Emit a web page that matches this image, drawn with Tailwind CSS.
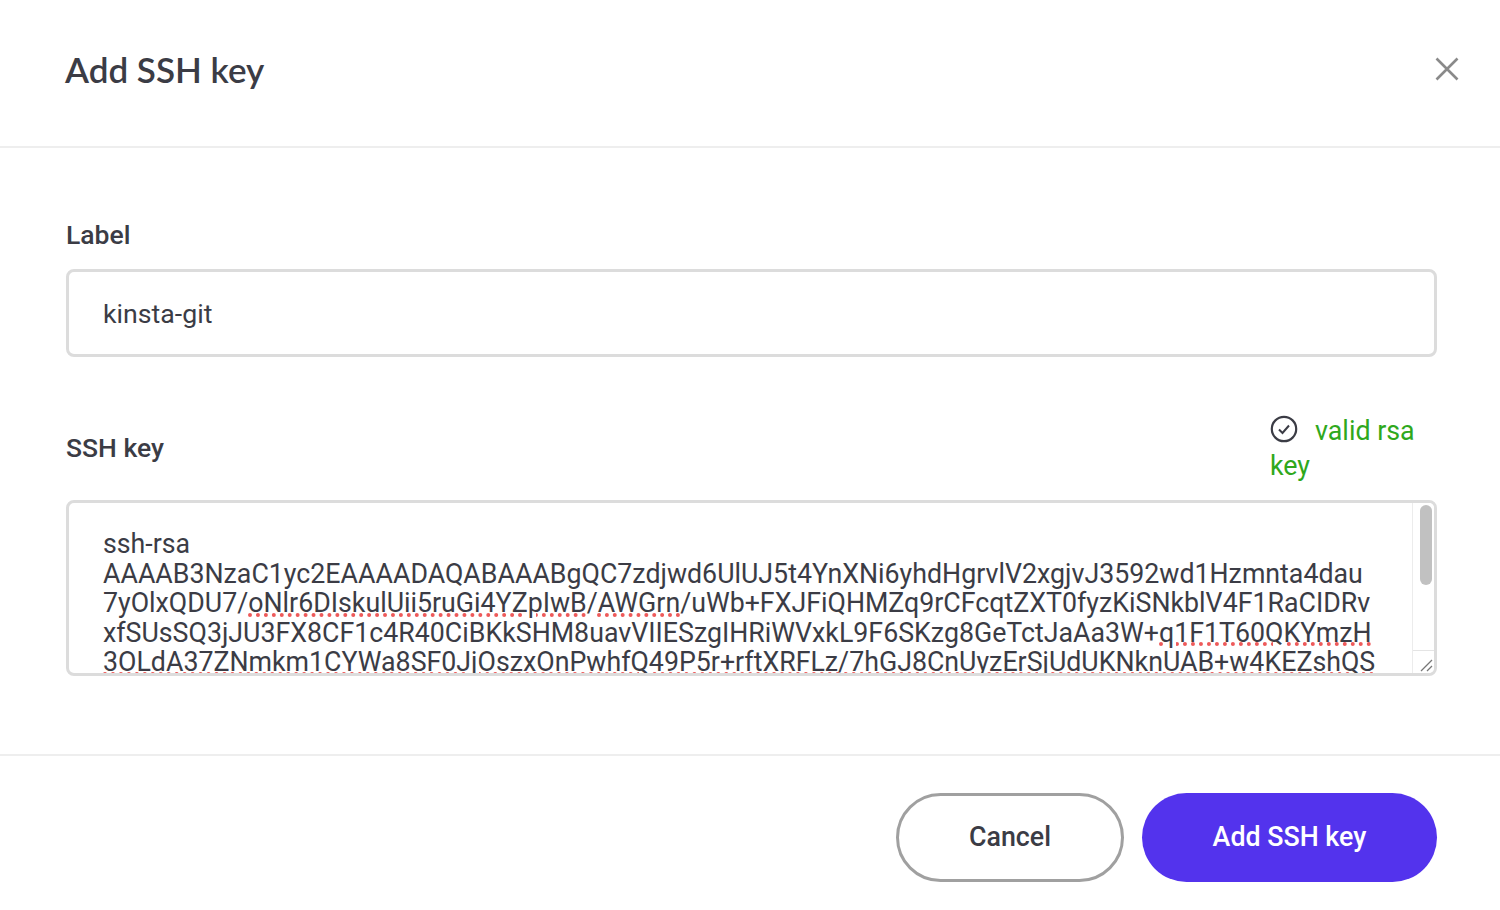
<!DOCTYPE html>
<html lang="en">

<head>
  <meta charset="UTF-8">
  <meta name="viewport" content="width=device-width, initial-scale=1.0">
  <script src="https://cdn.jsdelivr.net/npm/@tailwindcss/browser@4"></script>
  <title>Add SSH key</title>
</head>

<body class="bg-white text-[#3b3c45] font-['Roboto',sans-serif]">
  <div class="w-[1500px] h-[910px] overflow-hidden flex flex-col">
    <!-- header -->
    <div class="h-[148px] shrink-0 border-b-2 border-[#eeeeee] pl-[65px] pr-[40px] pb-[8px] flex justify-between items-center">
      <h1 class="font-['Lato',sans-serif] font-semibold text-[35px] leading-none">Add SSH key</h1>
      <button class="text-[#8a8a8a]">
        <svg class="w-[26px] h-[26px]" viewBox="0 0 26 26" fill="none" stroke="currentColor" stroke-width="2.6">
          <path d="M2.5 2.5l21 21M23.5 2.5l-21 21"></path>
        </svg>
      </button>
    </div>

    <!-- form -->
    <div class="h-[608px] shrink-0 border-b-2 border-[#eeeeee] pl-[66px] pr-[63px] pt-[71px]">
      <label class="block text-[26.5px] font-medium leading-[32px]">Label</label>
      <div class="mt-[18px] h-[88px] border-[3px] border-[#dcdcdc] rounded-[8px] pl-[34px] pt-[3px] flex items-center text-[26.7px]">kinsta-git</div>

      <div class="mt-[44px] h-[99px] flex justify-between">
        <label class="block text-[26.5px] font-medium leading-[32px] mt-[31px]">SSH key</label>
        <div class="w-[167px] text-[26.8px] leading-[35px] text-[#2fa81c] pt-[13px]">
          <svg class="inline-block w-[28px] h-[28px] mr-[17px] align-[-3px] text-[#3b3c45]" viewBox="0 0 28 28" fill="none" stroke="currentColor">
            <circle cx="14" cy="14" r="12.2" stroke-width="2.2"></circle>
            <path d="M9 14.5l3.5 3.5 6.5-7.5" stroke-width="2"></path>
          </svg>valid rsa key
        </div>
      </div>

      <div class="relative h-[176px] border-[3px] border-[#dcdcdc] rounded-[8px] overflow-hidden">
        <div class="pl-[34px] pt-[27px] text-[26.76px] leading-[29.6px] whitespace-nowrap text-[#3b3c45]">
          <div>ssh-rsa</div>
          <div>AAAAB3NzaC1yc2EAAAADAQABAAABgQC7zdjwd6UlUJ5t4YnXNi6yhdHgrvlV2xgjvJ3592wd1Hzmnta4dau</div>
          <div>7yOlxQDU7/<span class="underline decoration-dotted decoration-[#ee5a5a] decoration-[4px] underline-offset-[1px]">oNlr6DIskulUii5ruGi4YZpIwB</span>/<span class="underline decoration-dotted decoration-[#ee5a5a] decoration-[4px] underline-offset-[1px]">AWGrn</span>/uWb+FXJFiQHMZq9rCFcqtZXT0fyzKiSNkblV4F1RaCIDRv</div>
          <div>xfSUsSQ3jJU3FX8CF1c4R40CiBKkSHM8uavVIIESzgIHRiWVxkL9F6SKzg8GeTctJaAa3W+<span class="underline decoration-dotted decoration-[#ee5a5a] decoration-[4px] underline-offset-[1px]">q1F1T60QKYmzH</span></div>
          <div><span class="underline decoration-dotted decoration-[#ee5a5a] decoration-[4px] underline-offset-[1px]">3OLdA37ZNmkm1CYWa8SF0JjOszxOnPwhfQ49P5r+rftXRFLz/7hGJ8CnUyzErSjUdUKNknUAB+w4KEZshQS</span></div>
        </div>
        <!-- scrollbar + resize handle -->
        <div class="absolute top-0 right-0 bottom-0 w-[22px] bg-white border-l border-[#ececec] flex flex-col">
          <div class="mt-[2px] ml-[6.5px] w-[12px] h-[80px] rounded-full bg-[#c1c1c1]"></div>
          <div class="mt-auto h-[23px] border-t border-[#e4e4e4] flex items-end justify-end">
            <svg class="w-[16px] h-[16px]" viewBox="0 0 16 16" fill="none" stroke="#777777" stroke-width="1.3">
              <path d="M3 14L14 3M9 14l5-5"></path>
            </svg>
          </div>
        </div>
      </div>
    </div>

    <!-- footer -->
    <div class="pr-[63px] pt-[37px] flex justify-end gap-[18px]">
      <button class="w-[228px] h-[89px] rounded-full border-[3px] border-[#a0a0a0] text-[26.8px] font-medium text-[#3b3c45]">Cancel</button>
      <button class="w-[295px] h-[89px] rounded-full bg-[#5333ed] text-[26.8px] font-medium text-white">Add SSH key</button>
    </div>
  </div>
</body>
</html>
